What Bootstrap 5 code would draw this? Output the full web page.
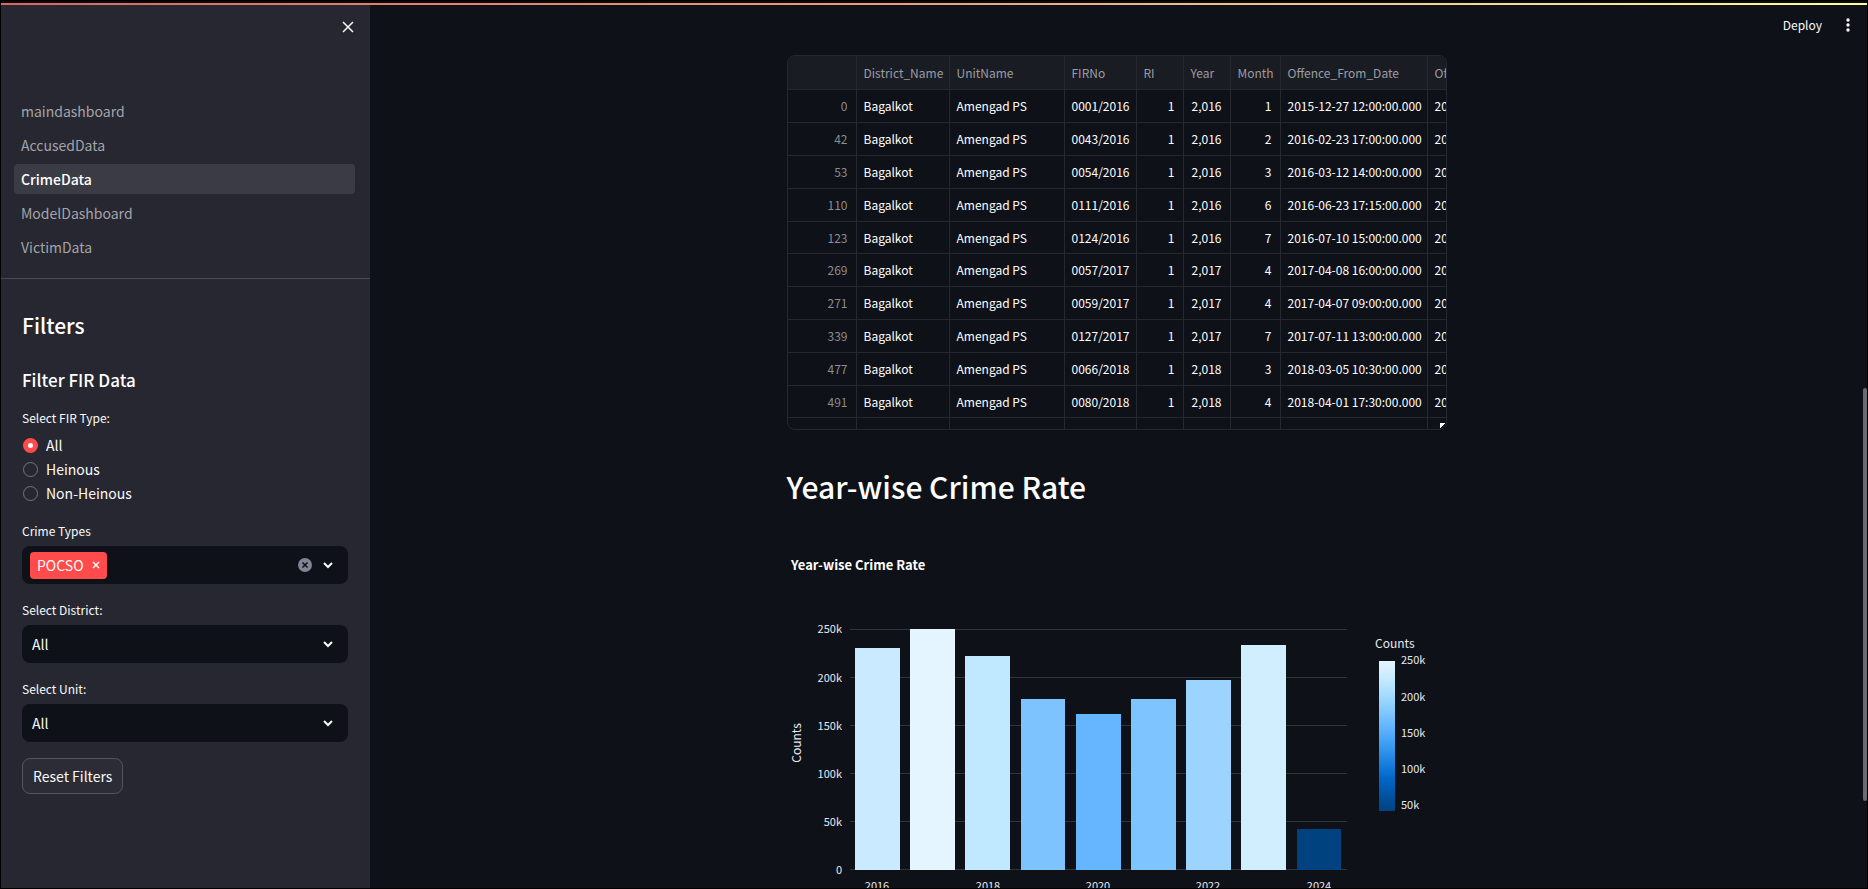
<!DOCTYPE html>
<html lang="en" data-bs-theme="dark">
<head>
<meta charset="utf-8">
<meta name="viewport" content="width=device-width, initial-scale=1">
<title>CrimeData</title>
<link href="https://cdn.jsdelivr.net/npm/bootstrap@5.3.0/dist/css/bootstrap.min.css" rel="stylesheet">
<style>
  :root { --ink: #fafafa; --page: #0e1117; --panel: #262730; --line: #25282f; }
  body { font-family: "Noto Sans CJK SC", "Source Sans Pro", sans-serif; font-size: 14px; line-height: 20px; color: var(--ink); background: var(--page); border: 1px solid #000; }
  .rainbow { height: 4px; flex: none; border-top: 2px solid #080a0e; background: linear-gradient(90deg, #dc6662, #e8a37c 50%, #fffd9a); }
  .side { width: 369px; flex: none; background: var(--panel); }
  .side-top { padding: 12px 12px 0 0; height: 91px; }
  .icon-btn { color: var(--ink); background: none; border: 0; padding: 0; line-height: 0; }
  .side-links { padding: 0 15px 16px 13px; gap: 4px; border-bottom: 1px solid #4a4b54; }
  .side-links .nav-link { height: 30px; padding: 5px 7px; line-height: 20px; color: #a3a4a9; border-radius: 4px; }
  .side-links .nav-link.active { background: #3b3b46; color: #fff; font-weight: 500; }
  .filters { padding: 31px 22px 0 21px; }
  .filters h2 { font-size: 21px; line-height: 30px; font-weight: 500; margin: 0 0 28px; color: #fff; }
  .filters h3 { font-size: 17px; line-height: 24px; font-weight: 500; margin: 0 0 16px; color: #fff; }
  .lbl { font-size: 12px; line-height: 20px; margin: 0 0 5px; display: block; float: none; }
  .radio-row { height: 24px; gap: 8px; padding-left: 1px; }
  .radio-row .form-check-input { width: 15px; height: 15px; margin: 0; background-color: transparent; border: 1px solid #74757d; }
  .radio-row .form-check-input:checked { border: 5px solid #ff4b4b; background: #fff; }
  .pick { height: 38px; border: 0; border-radius: 8px; color: var(--ink); background-color: var(--page); font-size: 14px; line-height: 20px; padding: 9px 10px;
    background-image: url("data:image/svg+xml,%3Csvg xmlns='http://www.w3.org/2000/svg' viewBox='0 0 12 12'%3E%3Cpath d='M2 4l4 4 4-4' fill='none' stroke='%23fafafa' stroke-width='2'/%3E%3C/svg%3E"); background-size: 12px 12px; background-position: right 14px center; }
  .multi { height: 38px; border-radius: 8px; background: var(--page); padding: 0 14px 0 8px; }
  .chip { height: 27px; border-radius: 4px; background: #ff4b4b; padding: 0 7px; gap: 8px; }
  .reset { height: 36px; border: 1px solid #54555e; border-radius: 8px; background: #2b2c36; color: var(--ink); font-size: 14px; line-height: 20px; padding: 0 10px; }
  .field { margin-bottom: 16px; }
  .content { padding-right: 4px; }
  .topbar { height: 50px; padding: 8px 9px 0 0; gap: 20px; font-size: 12px; }
  .deploy { font-size: 12px; line-height: 24px; }
  .block { width: 100%; max-width: 660px; margin: 0 auto; }
  .grid-box { height: 375px; border: 1px solid var(--line); border-radius: 8px; overflow: hidden; position: relative; }
  .grid-table { table-layout: fixed; width: 760px; border-collapse: separate; border-spacing: 0; font-size: 12px; line-height: 20px; }
  .grid-table th, .grid-table td { padding: 0 8px 0 7px; border-right: 1px solid var(--line); border-bottom: 1px solid var(--line); white-space: nowrap; font-weight: 400; }
  .grid-table thead tr { height: 34px; }
  .grid-table thead th { background: #1a1c24; color: #9b9ca2; padding-right: 0; }
  .grid-table tbody tr { height: 33px; }
  .grid-table tbody tr:nth-child(5n) { height: 32px; }
  .grid-table tbody th { color: #8b8c92; text-align: right; }
  .grid-table td { color: #fff; }
  .grid-table .num { text-align: right; }
  .grip { position: absolute; right: 1px; bottom: 1px; width: 5px; height: 5px; background: linear-gradient(135deg, #fff 60%, transparent 60%); }
  .block h1 { font-size: 30px; line-height: 44px; font-weight: 500; margin: 34px 0 22px; color: #fff; }
  .chart { display: block; width: 100%; }
  .chart text { fill: #e6eaf1; font-size: 11px; }
  .chart .big { font-size: 13px; fill: #fff; }
  .chart .axis-name { font-size: 12px; }
  .thumb { position: absolute; right: 0; top: 43.4%; height: 46.8%; width: 4px; border-radius: 2px; background: #6b6c71; }
</style>
</head>
<body class="vh-100 overflow-hidden d-flex flex-column">
<div class="rainbow"></div>
<div class="d-flex flex-grow-1 overflow-hidden position-relative">
  <aside class="side">
    <div class="side-top d-flex justify-content-end align-items-start">
      <button class="icon-btn" type="button" aria-label="Close sidebar"><svg width="20" height="20" viewBox="0 0 20 20"><path d="M5 5l10 10M15 5L5 15" stroke="currentColor" stroke-width="1.5" fill="none"/></svg></button>
    </div>
    <nav class="side-links nav flex-column flex-nowrap">
      <a class="nav-link" href="#">maindashboard</a>
      <a class="nav-link" href="#">AccusedData</a>
      <a class="nav-link active" href="#" aria-current="page">CrimeData</a>
      <a class="nav-link" href="#">ModelDashboard</a>
      <a class="nav-link" href="#">VictimData</a>
    </nav>
    <form class="filters">
      <h2>Filters</h2>
      <h3>Filter FIR Data</h3>
      <fieldset class="field">
        <legend class="lbl">Select FIR Type:</legend>
        <div class="radio-row d-flex align-items-center"><input class="form-check-input" type="radio" name="fir" id="f1" checked><label for="f1">All</label></div>
        <div class="radio-row d-flex align-items-center"><input class="form-check-input" type="radio" name="fir" id="f2"><label for="f2">Heinous</label></div>
        <div class="radio-row d-flex align-items-center"><input class="form-check-input" type="radio" name="fir" id="f3"><label for="f3">Non-Heinous</label></div>
      </fieldset>
      <div class="field">
        <span class="lbl" id="ct">Crime Types</span>
        <div class="multi d-flex align-items-center" role="group" aria-labelledby="ct">
          <span class="chip d-flex align-items-center">POCSO
            <button class="icon-btn" type="button" aria-label="Remove POCSO"><svg width="8" height="8" viewBox="0 0 8 8"><path d="M1 1l6 6M7 1L1 7" stroke="currentColor" stroke-width="1.5"/></svg></button></span>
          <button class="icon-btn ms-auto me-2" type="button" aria-label="Clear all"><svg width="18" height="14" viewBox="0 0 18 14"><circle cx="9" cy="7" r="7" fill="#808495"/><path d="M6.500 4.500l5 5M11.500 4.500l-5 5" stroke="#0e1117" stroke-width="1.500"/></svg></button>
          <button class="icon-btn" type="button" aria-label="Open list"><svg width="12" height="12" viewBox="0 0 12 12"><path d="M2 4l4 4 4-4" fill="none" stroke="currentColor" stroke-width="2"/></svg></button>
        </div>
      </div>
      <div class="field">
        <label class="lbl" for="district">Select District:</label>
        <select class="form-select pick" id="district"><option>All</option></select>
      </div>
      <div class="field">
        <label class="lbl" for="unit">Select Unit:</label>
        <select class="form-select pick" id="unit"><option>All</option></select>
      </div>
      <button class="reset" type="button">Reset Filters</button>
    </form>
  </aside>
  <main class="content flex-grow-1">
    <header class="topbar d-flex justify-content-end align-items-start">
      <button class="icon-btn deploy" type="button">Deploy</button>
      <button class="icon-btn" type="button" aria-label="Menu"><svg width="12" height="24" viewBox="0 0 12 24"><g fill="currentColor"><circle cx="6" cy="7" r="1.700"/><circle cx="6" cy="12" r="1.700"/><circle cx="6" cy="17" r="1.700"/></g></svg></button>
    </header>
    <div class="block">
      <div class="grid-box">
        <table class="grid-table">
          <colgroup><col style="width:69px"><col style="width:93px"><col style="width:115px"><col style="width:72px"><col style="width:47px"><col style="width:47px"><col style="width:50px"><col style="width:147px"><col></colgroup>
          <thead><tr><th></th><th>District_Name</th><th>UnitName</th><th>FIRNo</th><th>RI</th><th>Year</th><th>Month</th><th>Offence_From_Date</th><th>Offence_To_Date</th></tr></thead>
          <tbody>
            <tr><th>0</th><td>Bagalkot</td><td>Amengad PS</td><td>0001/2016</td><td class="num">1</td><td class="num">2,016</td><td class="num">1</td><td>2015-12-27 12:00:00.000</td><td>2016</td></tr>
            <tr><th>42</th><td>Bagalkot</td><td>Amengad PS</td><td>0043/2016</td><td class="num">1</td><td class="num">2,016</td><td class="num">2</td><td>2016-02-23 17:00:00.000</td><td>2016</td></tr>
            <tr><th>53</th><td>Bagalkot</td><td>Amengad PS</td><td>0054/2016</td><td class="num">1</td><td class="num">2,016</td><td class="num">3</td><td>2016-03-12 14:00:00.000</td><td>2016</td></tr>
            <tr><th>110</th><td>Bagalkot</td><td>Amengad PS</td><td>0111/2016</td><td class="num">1</td><td class="num">2,016</td><td class="num">6</td><td>2016-06-23 17:15:00.000</td><td>2016</td></tr>
            <tr><th>123</th><td>Bagalkot</td><td>Amengad PS</td><td>0124/2016</td><td class="num">1</td><td class="num">2,016</td><td class="num">7</td><td>2016-07-10 15:00:00.000</td><td>2016</td></tr>
            <tr><th>269</th><td>Bagalkot</td><td>Amengad PS</td><td>0057/2017</td><td class="num">1</td><td class="num">2,017</td><td class="num">4</td><td>2017-04-08 16:00:00.000</td><td>2017</td></tr>
            <tr><th>271</th><td>Bagalkot</td><td>Amengad PS</td><td>0059/2017</td><td class="num">1</td><td class="num">2,017</td><td class="num">4</td><td>2017-04-07 09:00:00.000</td><td>2017</td></tr>
            <tr><th>339</th><td>Bagalkot</td><td>Amengad PS</td><td>0127/2017</td><td class="num">1</td><td class="num">2,017</td><td class="num">7</td><td>2017-07-11 13:00:00.000</td><td>2017</td></tr>
            <tr><th>477</th><td>Bagalkot</td><td>Amengad PS</td><td>0066/2018</td><td class="num">1</td><td class="num">2,018</td><td class="num">3</td><td>2018-03-05 10:30:00.000</td><td>2018</td></tr>
            <tr><th>491</th><td>Bagalkot</td><td>Amengad PS</td><td>0080/2018</td><td class="num">1</td><td class="num">2,018</td><td class="num">4</td><td>2018-04-01 17:30:00.000</td><td>2018</td></tr>
            <tr><th></th><td></td><td></td><td></td><td></td><td></td><td></td><td></td><td></td></tr>
          </tbody>
        </table>
        <span class="grip"></span>
      </div>
      <h1>Year-wise Crime Rate</h1>
      <svg class="chart" viewBox="0 0 660 420" role="img" aria-label="Year-wise Crime Rate">
        <defs><linearGradient id="blues" x1="0" y1="0" x2="0" y2="1">
          <stop offset="0" stop-color="#e4f5ff"/><stop offset=".111" stop-color="#c7ebff"/><stop offset=".222" stop-color="#a6dcff"/><stop offset=".333" stop-color="#83c9ff"/><stop offset=".444" stop-color="#60b4ff"/><stop offset=".556" stop-color="#3d9df3"/><stop offset=".667" stop-color="#1c83e1"/><stop offset=".778" stop-color="#0068c9"/><stop offset=".889" stop-color="#0054a3"/><stop offset="1" stop-color="#004280"/>
        </linearGradient></defs>
        <text class="big" x="4" y="40" font-weight="700">Year-wise Crime Rate</text>
        <path d="M63 99.500h497M63 147.500h497M63 195.500h497M63 243.500h497M63 291.500h497M63 339.500h497" stroke="#31333a" fill="none"/>
        <g>
          <rect x="68" y="118" width="45" height="222" fill="#caebff"/>
          <rect x="123" y="99" width="45" height="241" fill="#e4f5ff"/>
          <rect x="178" y="126" width="45" height="214" fill="#c0e8ff"/>
          <rect x="234" y="169" width="44" height="171" fill="#7dc4ff"/>
          <rect x="289" y="184" width="45" height="156" fill="#66b5ff"/>
          <rect x="344" y="169" width="45" height="171" fill="#7ec5ff"/>
          <rect x="399" y="150" width="45" height="190" fill="#9dd4ff"/>
          <rect x="454" y="115" width="45" height="225" fill="#d0eeff"/>
          <rect x="510" y="299" width="44" height="41" fill="#004280"/>
        </g>
        <g text-anchor="end">
          <text x="55" y="103">250k</text><text x="55" y="152">200k</text><text x="55" y="200">150k</text><text x="55" y="248">100k</text><text x="55" y="296">50k</text><text x="55" y="344">0</text>
        </g>
        <g text-anchor="middle">
          <text x="90" y="360">2016</text><text x="201" y="360">2018</text><text x="311" y="360">2020</text><text x="421" y="360">2022</text><text x="532" y="360">2024</text>
          <text class="axis-name" transform="translate(14 213) rotate(-90)">Counts</text>
        </g>
        <text class="axis-name" x="588" y="118">Counts</text>
        <rect x="592" y="131" width="16" height="150" fill="url(#blues)"/>
        <text x="614" y="134">250k</text><text x="614" y="171">200k</text><text x="614" y="207">150k</text><text x="614" y="243">100k</text><text x="614" y="279">50k</text>
      </svg>
    </div>
  </main>
  <div class="thumb"></div>
</div>
<script src="https://cdn.jsdelivr.net/npm/bootstrap@5.3.0/dist/js/bootstrap.bundle.min.js"></script>
</body>
</html>
